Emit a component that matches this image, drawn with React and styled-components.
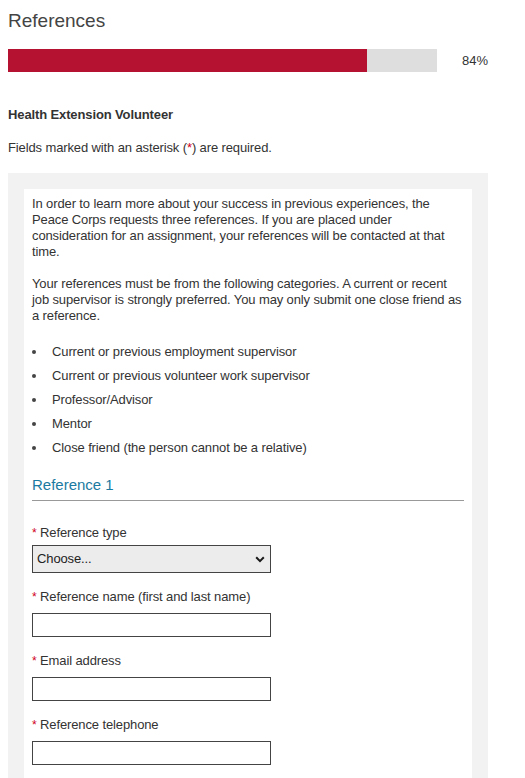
import React from "react";
import styled, { createGlobalStyle } from "styled-components";

const Global = createGlobalStyle`
  html, body { margin: 0; padding: 0; background: #fff; }
  body {
    font-family: "Liberation Sans", Arial, sans-serif;
    font-size: 13px;
    line-height: 16px;
    letter-spacing: -0.12px;
    color: #333;
  }
  * { box-sizing: border-box; }
`;

const Page = styled.div`
  width: 480px;
  margin: 0 8px;
  padding-top: 9px;
`;

const Title = styled.h1`
  margin: 0;
  font-size: 19px;
  line-height: 23px;
  font-weight: normal;
  letter-spacing: 0;
  color: #444;
`;

const ProgressRow = styled.div`
  display: flex;
  align-items: center;
  justify-content: space-between;
  margin-top: 17px;
`;

const Track = styled.div`
  width: 429px;
  height: 23px;
  background: #dedede;
  display: flex;
`;

const Fill = styled.div`
  height: 100%;
  background: #b51232;
`;

const Percent = styled.span`
  font-size: 13px;
  letter-spacing: 0;
  color: #333;
`;

const Subtitle = styled.h2`
  margin: 35px 0 0;
  font-size: 13px;
  line-height: 16px;
  font-weight: bold;
  color: #333;
`;

const Note = styled.p`
  margin: 17px 0 0;
`;

const Req = styled.span`
  color: #d0021b;
`;

const Panel = styled.div`
  margin-top: 17px;
  background: #f2f2f2;
  padding: 16px 16px 0;
`;

const Card = styled.div`
  background: #fff;
  padding: 7px 8px 20px;
`;

const Para = styled.p`
  margin: 0 0 16px;
`;

const List = styled.ul`
  list-style: none;
  margin: 0;
  padding: 0;
`;

const Item = styled.li`
  display: flex;
  align-items: center;
  height: 24px;
  &::before {
    content: "";
    width: 4px;
    height: 4px;
    border-radius: 50%;
    background: #444;
    margin-right: 16px;
    flex: none;
  }
`;

const SectionHead = styled.h3`
  margin: 16px 0 0;
  padding-bottom: 6px;
  border-bottom: 1px solid #999;
  font-size: 15px;
  line-height: 18px;
  font-weight: normal;
  letter-spacing: 0;
  color: #1b7aa1;
`;

const Fields = styled.div`
  padding-top: 24px;
  display: flex;
  flex-direction: column;
`;

const Group = styled.div`
  display: flex;
  flex-direction: column;
  align-items: flex-start;
  margin-bottom: 16px;
`;

const Label = styled.label`
  line-height: 16px;
  margin-bottom: ${(p) => (p.$select ? "4px" : "8px")};
`;

const Star = styled.span`
  color: #d0021b;
  font-size: 12px;
`;

const SelectBox = styled.div`
  width: 239px;
  height: 28px;
  border: 1px solid #444;
  background: #ececec;
  display: flex;
  align-items: center;
  justify-content: space-between;
  padding: 0 5px 0 4px;
  font-size: 13px;
  color: #222;
`;

const Input = styled.input`
  width: 239px;
  height: 24px;
  border: 1px solid #444;
  background: #fff;
  padding: 0 4px;
  font-family: inherit;
  font-size: 13px;
  margin: 0;
  outline: none;
`;

const Chevron = () => (
  <svg width="10" height="7" viewBox="0 0 10 7" aria-hidden="true">
    <path d="M1.2 1.3 L5 5.1 L8.8 1.3" fill="none" stroke="#1a1a1a" strokeWidth="2" />
  </svg>
);

const Field = ({ label }) => (
  <Group>
    <Label>
      <Star>*</Star> {label}
    </Label>
    <Input type="text" />
  </Group>
);

export default function App() {
  const pct = 84;
  return (
    <>
      <Global />
      <Page>
        <Title>References</Title>
        <ProgressRow>
          <Track>
            <Fill style={{ width: `${(pct * 0.995).toFixed(1)}%`, maxWidth: "359px" }} />
          </Track>
          <Percent>{pct}%</Percent>
        </ProgressRow>
        <Subtitle>Health Extension Volunteer</Subtitle>
        <Note>
          Fields marked with an asterisk (<Req>*</Req>) are required.
        </Note>
        <Panel>
          <Card>
            <Para>
              In order to learn more about your success in previous experiences, the Peace
              Corps requests three references. If you are placed under consideration for an
              assignment, your references will be contacted at that time.
            </Para>
            <Para>
              Your references must be from the following categories. A current or recent job
              supervisor is strongly preferred. You may only submit one close friend as a
              reference.
            </Para>
            <List>
              <Item>Current or previous employment supervisor</Item>
              <Item>Current or previous volunteer work supervisor</Item>
              <Item>Professor/Advisor</Item>
              <Item>Mentor</Item>
              <Item>Close friend (the person cannot be a relative)</Item>
            </List>
            <SectionHead>Reference 1</SectionHead>
            <Fields>
              <Group>
                <Label $select>
                  <Star>*</Star> Reference type
                </Label>
                <SelectBox>
                  <span>Choose...</span>
                  <Chevron />
                </SelectBox>
              </Group>
              <Field label="Reference name (first and last name)" />
              <Field label="Email address" />
              <Field label="Reference telephone" />
            </Fields>
          </Card>
        </Panel>
      </Page>
    </>
  );
}
